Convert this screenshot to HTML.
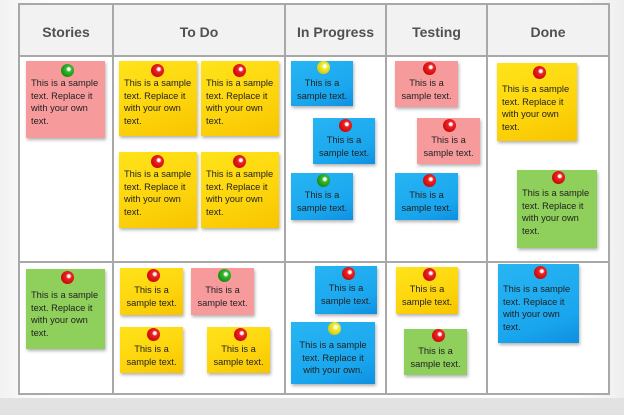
<!DOCTYPE html><html><head><style>
body{margin:0;width:624px;height:415px;overflow:hidden;background:linear-gradient(90deg,#f2f2f2,#fff 8%,#fff 92%,#eee);font-family:"Liberation Sans",sans-serif;position:relative}
.bot{position:absolute;left:0;top:398px;width:624px;height:17px;background:#e2e2e2}
.t{position:absolute;left:18px;top:3px;width:592px;height:392px;border:2px solid #a8a8a8;box-sizing:border-box;background:#fff}
.h{position:absolute;left:0;top:0;width:100%;height:52px;background:#f2f2f2;border-bottom:2px solid #a8a8a8;box-sizing:border-box}
.v{position:absolute;top:0;width:2px;height:100%;background:#a8a8a8}
.r{position:absolute;left:0;top:256px;width:100%;height:2px;background:#a8a8a8}
.hd{position:absolute;top:19px;font-size:14px;font-weight:bold;color:#505050;text-align:center}
.n{position:absolute;box-sizing:border-box;font-size:9.3px;line-height:12.5px;color:#222;padding:16px 4px 0 5px;box-shadow:1px 2px 3px rgba(0,0,0,.3)}
.c{text-align:center;padding-left:2px;padding-right:2px}
.y{background:linear-gradient(160deg,#ffe31a,#fdd40c 60%,#f7c400)}
.p{background:#f79a9c}
.b{background:linear-gradient(160deg,#28b5f3,#19a6ee 70%,#0f8fe0)}
.g{background:#8fcf5b}
.pin{position:absolute;width:13px;height:13px;border-radius:50%;background:radial-gradient(circle at 60% 40%,#fff 0 12%,#e22 25%,#b00 90%);top:-2px;margin-left:-1px}
.pg{background:radial-gradient(circle at 60% 40%,#fff 0 12%,#3b3 25%,#170 90%)}
.py{background:radial-gradient(circle at 60% 40%,#fff 0 12%,#ee3 25%,#cb0 90%)}
</style></head><body>
<div class="bot"></div>
<div class="t"><div class="h"></div>
<div class="v" style="left:92px"></div><div class="v" style="left:264px"></div><div class="v" style="left:365px"></div><div class="v" style="left:466px"></div>
<div class="r"></div>
<div class="hd" style="left:0;width:92px">Stories</div>
<div class="hd" style="left:94px;width:170px">To Do</div>
<div class="hd" style="left:266px;width:99px">In Progress</div>
<div class="hd" style="left:367px;width:99px">Testing</div>
<div class="hd" style="left:468px;width:120px">Done</div>
</div>
<div class="n p" style="left:26px;top:61px;width:79px;height:77px"><span class="pin pg" style="left:36px;top:3px"></span>This is a sample text. Replace it with your own text.</div>
<div class="n y" style="left:119px;top:61px;width:78px;height:75px"><span class="pin" style="left:33px;top:3px"></span>This is a sample text. Replace it with your own text.</div>
<div class="n y" style="left:201px;top:61px;width:78px;height:75px"><span class="pin" style="left:33px;top:3px"></span>This is a sample text. Replace it with your own text.</div>
<div class="n y" style="left:119px;top:152px;width:78px;height:76px"><span class="pin" style="left:33px;top:3px"></span>This is a sample text. Replace it with your own text.</div>
<div class="n y" style="left:201px;top:152px;width:78px;height:76px"><span class="pin" style="left:33px;top:3px"></span>This is a sample text. Replace it with your own text.</div>
<div class="n b c" style="left:291px;top:61px;width:62px;height:45px"><span class="pin py" style="left:27px;top:0px"></span>This is a sample text.</div>
<div class="n b c" style="left:313px;top:118px;width:62px;height:46px"><span class="pin" style="left:27px;top:1px"></span>This is a sample text.</div>
<div class="n b c" style="left:291px;top:173px;width:62px;height:47px"><span class="pin pg" style="left:27px;top:1px"></span>This is a sample text.</div>
<div class="n p c" style="left:395px;top:61px;width:63px;height:46px"><span class="pin" style="left:29px;top:1px"></span>This is a sample text.</div>
<div class="n p c" style="left:417px;top:118px;width:63px;height:46px"><span class="pin" style="left:27px;top:1px"></span>This is a sample text.</div>
<div class="n b c" style="left:395px;top:173px;width:63px;height:47px"><span class="pin" style="left:29px;top:1px"></span>This is a sample text.</div>
<div class="n y" style="left:497px;top:63px;width:80px;height:78px;padding-top:20px"><span class="pin" style="left:37px;top:3px"></span>This is a sample text. Replace it with your own text.</div>
<div class="n g" style="left:517px;top:170px;width:80px;height:78px;padding-top:17px"><span class="pin" style="left:36px;top:1px"></span>This is a sample text. Replace it with your own text.</div>
<div class="n g" style="left:26px;top:269px;width:79px;height:80px;padding-top:20px"><span class="pin" style="left:36px;top:2px"></span>This is a sample text. Replace it with your own text.</div>
<div class="n y c" style="left:120px;top:268px;width:63px;height:47px"><span class="pin" style="left:28px;top:1px"></span>This is a sample text.</div>
<div class="n p c" style="left:191px;top:268px;width:63px;height:47px"><span class="pin pg" style="left:28px;top:1px"></span>This is a sample text.</div>
<div class="n y c" style="left:120px;top:327px;width:63px;height:46px"><span class="pin" style="left:28px;top:1px"></span>This is a sample text.</div>
<div class="n y c" style="left:207px;top:327px;width:63px;height:46px"><span class="pin" style="left:28px;top:1px"></span>This is a sample text.</div>
<div class="n b c" style="left:315px;top:266px;width:62px;height:48px"><span class="pin" style="left:28px;top:1px"></span>This is a sample text.</div>
<div class="n b c" style="left:291px;top:322px;width:84px;height:62px;padding-top:17px"><span class="pin py" style="left:38px;top:0px"></span>This is a sample text. Replace it with your own.</div>
<div class="n y c" style="left:396px;top:267px;width:62px;height:47px"><span class="pin" style="left:28px;top:1px"></span>This is a sample text.</div>
<div class="n g c" style="left:404px;top:329px;width:63px;height:46px"><span class="pin" style="left:29px;top:0px"></span>This is a sample text.</div>
<div class="n b" style="left:498px;top:264px;width:81px;height:79px;padding-top:19px"><span class="pin" style="left:37px;top:2px"></span>This is a sample text. Replace it with your own text.</div>
</body></html>
